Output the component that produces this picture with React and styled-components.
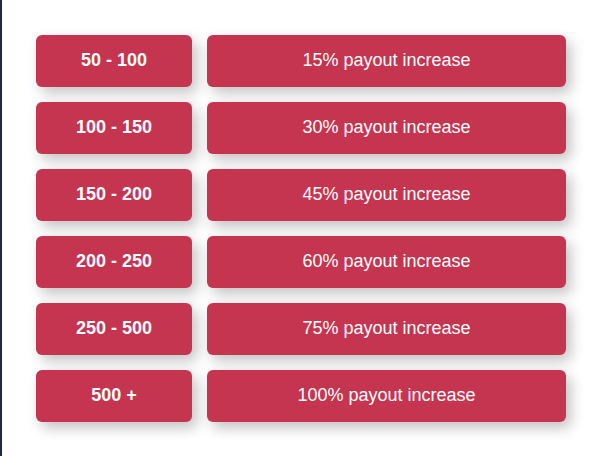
import React from "react";
import styled, { createGlobalStyle } from "styled-components";

const GlobalStyle = createGlobalStyle`
  html, body {
    margin: 0;
    padding: 0;
    background: #ffffff;
  }
`;

const Page = styled.div`
  min-height: 456px;
  box-sizing: border-box;
  border-left: 2px solid #1e2a44;
  padding: 35px 0 0 34px;
  font-family: "Liberation Sans", Arial, sans-serif;
`;

const Table = styled.div`
  display: grid;
  grid-template-columns: 156px 359px;
  column-gap: 15px;
  row-gap: 15px;
`;

const Cell = styled.div`
  height: 52px;
  box-sizing: border-box;
  padding-bottom: 2px;
  display: flex;
  align-items: center;
  justify-content: center;
  background-color: #c5354f;
  color: #ffffff;
  border-radius: 6px;
  font-size: 18px;
  font-weight: ${(p) => (p.$bold ? 700 : 400)};
  box-shadow: 5px 6px 14px rgba(0, 0, 0, 0.24);
`;

const tiers = [
  ["50 - 100", "15%"],
  ["100 - 150", "30%"],
  ["150 - 200", "45%"],
  ["200 - 250", "60%"],
  ["250 - 500", "75%"],
  ["500 +", "100%"],
];

const App = () => (
  <>
    <GlobalStyle />
    <Page>
      <Table>
        {tiers.map(([range, pct]) => (
          <React.Fragment key={range}>
            <Cell $bold>{range}</Cell>
            <Cell>{pct} payout increase</Cell>
          </React.Fragment>
        ))}
      </Table>
    </Page>
  </>
);

export default App;
